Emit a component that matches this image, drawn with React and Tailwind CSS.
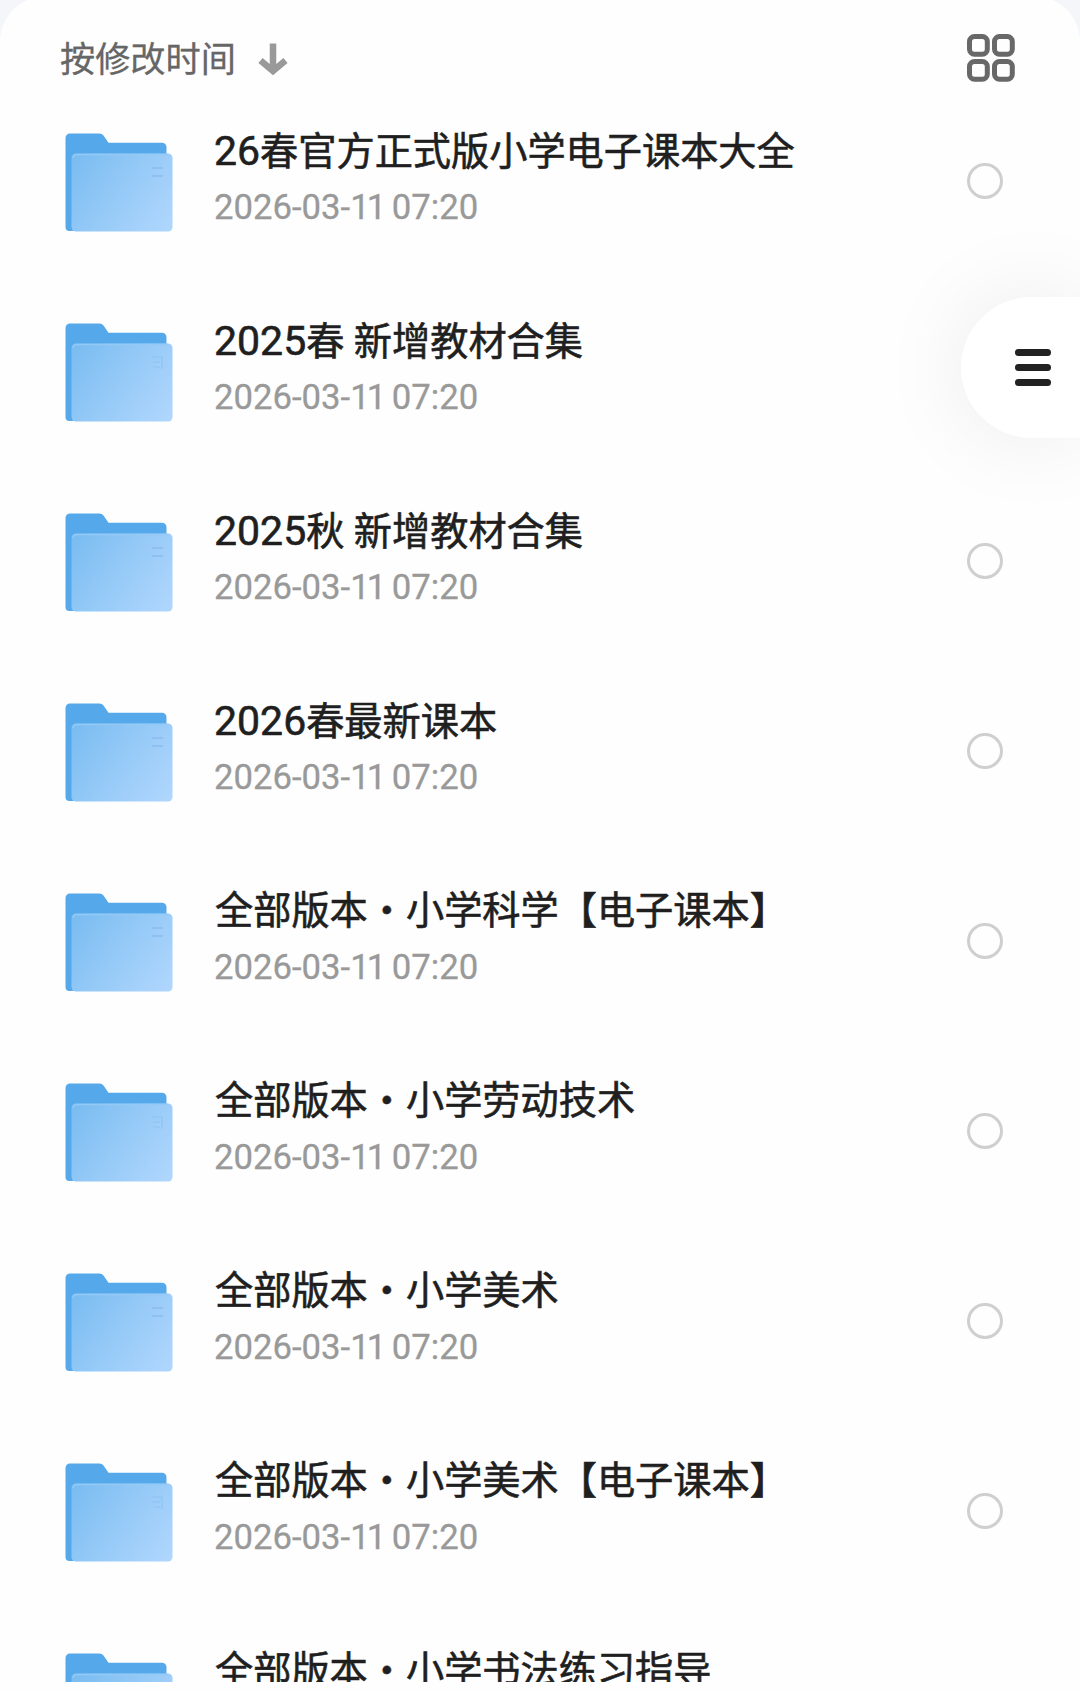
const files = [
  { prefix: '26', title: '春官方正式版小学电子课本大全', mark: 'lines' },
  { prefix: '2025', title: '春 新增教材合集', mark: 'block' },
  { prefix: '2025', title: '秋 新增教材合集', mark: 'lines' },
  { prefix: '2026', title: '春最新课本', mark: 'lines' },
  { title: '全部版本・小学科学【电子课本】', mark: 'lines' },
  { title: '全部版本・小学劳动技术', mark: 'block' },
  { title: '全部版本・小学美术', mark: 'lines' },
  { title: '全部版本・小学美术【电子课本】', mark: 'block' },
  { title: '全部版本・小学书法练习指导', mark: 'lines' },
];

const FolderIcon = ({ mark }) => (
  <svg width="108" height="99" viewBox="0 0 108 99" fill="none" className="shrink-0">
    <defs>
      <linearGradient id="folderFront" x1="8" y1="24" x2="104" y2="96" gradientUnits="userSpaceOnUse">
        <stop stopColor="#7abcf1" />
        <stop offset="0.5" stopColor="#96caf7" />
        <stop offset="1" stopColor="#afd6fd" />
      </linearGradient>
    </defs>
    <path d="M0.5 5a4.5 4.5 0 0 1 4.5-4.5h29.5a5 5 0 0 1 4 2l5 7.3H97a4.5 4.5 0 0 1 4.5 4.5V50L8 98H4.5a4 4 0 0 1-4-4Z" fill="#55a9ea" />
    <rect x="6.5" y="20.5" width="101" height="78" rx="4.5" fill="url(#folderFront)" />
    <path d="M8 25a3.5 3.5 0 0 1 3.5-3.5H103" stroke="#94c9f6" strokeWidth="1.5" />
    {mark === 'lines' ? (
      <path d="M87 35h11M87 43h11" stroke="#8ec1f1" strokeWidth="2" />
    ) : (
      <path d="M87 34h10v12M88 39h7M88 44h7" stroke="#93c6f4" strokeWidth="1.5" />
    )}
  </svg>
);

const ArrowDown = () => (
  <svg width="30" height="33" viewBox="0 0 30 33" fill="none" stroke="#999999" strokeWidth="6.5">
    <path d="M15 0.5V28M2.5 17.5 15 28l12.5-10.5" />
  </svg>
);

const GridIcon = () => (
  <svg width="48" height="48" viewBox="0 0 48 48" fill="none" stroke="#686868" strokeWidth="5">
    <rect x="2.5" y="2.5" width="17.8" height="17.8" rx="5" />
    <rect x="27.5" y="2.5" width="17.8" height="17.8" rx="5" />
    <rect x="2.5" y="27.5" width="17.8" height="17.8" rx="5" />
    <rect x="27.5" y="27.5" width="17.8" height="17.8" rx="5" />
  </svg>
);

const FileRow = ({ prefix, title, mark }) => (
  <li className="flex h-[190px] items-start pr-[77px] pl-[65px]">
    <FolderIcon mark={mark} />
    <div className="ml-[41px] flex-1 whitespace-nowrap">
      <p className="-mt-[10px] h-14 text-[38.2px] leading-[56px] text-[#1f1f1f] [-webkit-text-stroke:0.6px_#1f1f1f]">
        {prefix ? <span className="text-[41px]">{prefix}</span> : <span className="inline-block w-px"></span>}
        {title}
      </p>
      <p className="h-14 text-[34.7px] leading-[56px] text-[#999999] [-webkit-text-stroke:0.3px_#999999]">
        2026-03-<span className="tracking-[-3px]">11</span> 07:20
      </p>
    </div>
    <span className="mt-[30px] h-9 w-9 rounded-full border-[3px] border-[#cfcfcf]"></span>
  </li>
);

function App() {
  return (
    <div className="relative h-[1691px] w-[1080px] overflow-hidden bg-[#f4f6fa] font-[Roboto,'Noto_Sans_CJK_SC',sans-serif]">
      <div className="-mt-1 h-[1695px] rounded-t-[46px] bg-[#fefefe]">
        <div className="h-[1686px] overflow-hidden">
          <header className="flex h-[137px] items-start justify-between pt-[38px] pr-[65px] pl-[60px]">
            <div className="flex items-start">
              <span className="mt-px text-[35.2px] leading-[50px] text-[#666666] [-webkit-text-stroke:0.3px_#666666]">按修改时间</span>
              <span className="mt-[9px] ml-[22px]">
                <ArrowDown />
              </span>
            </div>
            <GridIcon />
          </header>
          <ul>
            {files.map((file, index) => (
              <FileRow key={index} {...file} />
            ))}
          </ul>
        </div>
      </div>

      {/* Floating menu tab on the right edge */}
      <button className="absolute top-[297px] right-0 flex h-[141px] w-[119px] flex-col items-start justify-center gap-2 rounded-l-full bg-white pl-[54px] shadow-[0_0_90px_rgba(0,0,0,0.08)]">
        <span className="h-[7px] w-9 rounded-full bg-[#222222]"></span>
        <span className="h-[7px] w-9 rounded-full bg-[#222222]"></span>
        <span className="h-[7px] w-9 rounded-full bg-[#222222]"></span>
      </button>
    </div>
  );
}

export default App;
